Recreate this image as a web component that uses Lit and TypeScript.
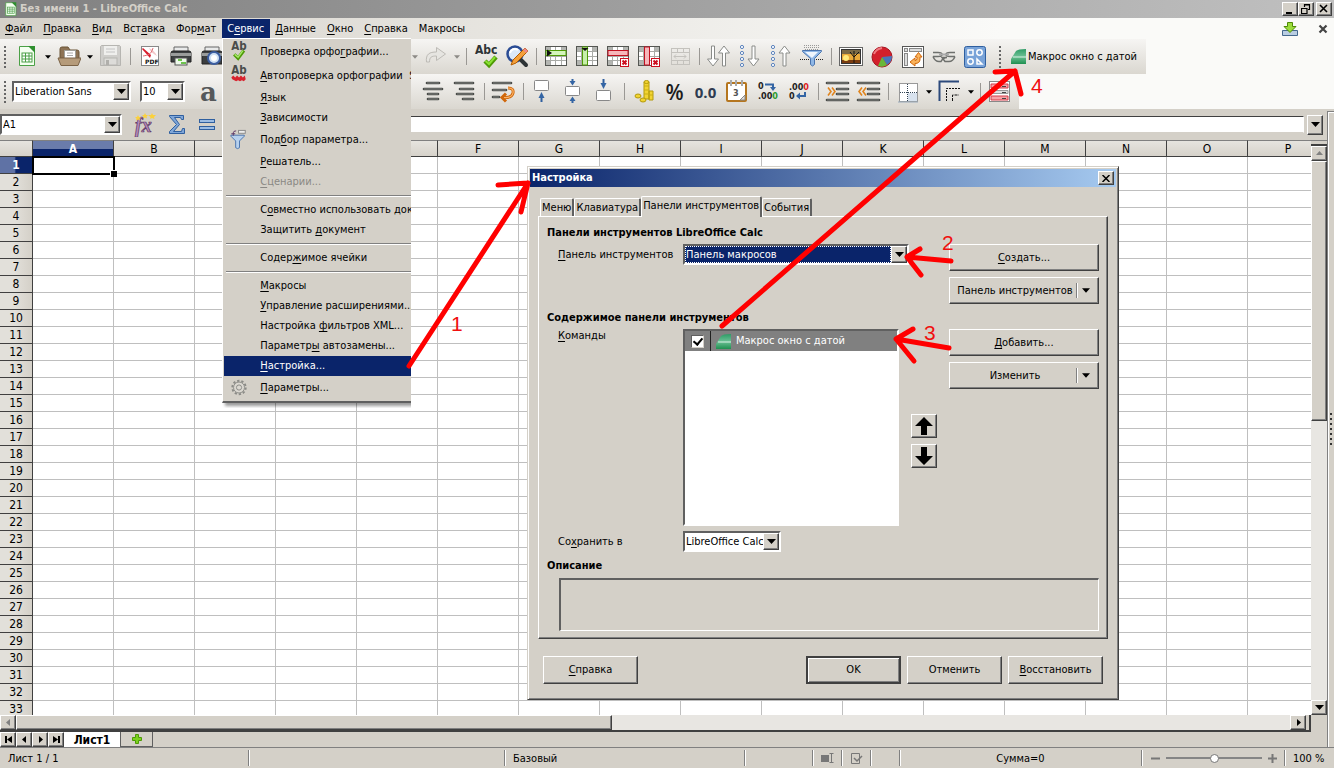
import { LitElement, html, svg, css, TemplateResult, SVGTemplateResult } from "lit";
import { customElement, property } from "lit/decorators.js";
import { classMap } from "lit/directives/class-map.js";

const FONT = css`"DejaVu Sans Condensed", "DejaVu Sans", sans-serif`;

const arrowDown = (x: number, y: number) => svg`<path d="M${x} ${y}v7" stroke="#2f5f9f" stroke-width="2"/><path d="M${x - 3} ${y + 4}h6l-3 6z" fill="#3465a4"/>`;
const arrowUp = (x: number, y: number) => svg`<path d="M${x} ${y}v-7" stroke="#2f5f9f" stroke-width="2"/><path d="M${x - 3} ${y - 4}h6l-3 -6z" fill="#3465a4"/>`;
const tableGrid = svg`<rect x="2.5" y="2.5" width="21" height="19" fill="#fff" stroke="#555753"/><path d="M3 3h5v4h-5zM3 17h5v4h-5zM18 3h5v4h-5z" fill="#b4b6b2"/><path d="M3 7.5h20M3 12.5h20M3 16.5h20M7.5 3v18M12.5 3v18M18.5 3v18" stroke="#a9aba7" fill="none"/>`;
const redCross = svg`<rect x="15.5" y="14.5" width="8" height="8" fill="#fff" stroke="#cc1020"/><path d="M17.5 16.5l4 4M21.5 16.5l-4 4" stroke="#cc1020" stroke-width="2"/>`;
const dots = svg`<g fill="#fff" stroke="#5b83bd"><circle cx="5" cy="3" r="1.6"/><circle cx="5" cy="9" r="1.6"/><circle cx="5" cy="15" r="1.6"/><circle cx="5" cy="21" r="1.6"/></g>`;
const longArrow = "M-1.5 0h3v13h4l-5.500 7l-5.500 -7h4z";
const bars = (pts: number[][]) => svg`<g stroke="#4a4c49" stroke-width="2.6" stroke-linecap="round">${pts.map(([x1, x2, y]) => svg`<path d="M${x1} ${y}H${x2}"/>`)}</g><g stroke="#8b8d8a" stroke-width=".8">${pts.map(([x1, x2, y]) => svg`<path d="M${x1} ${y}H${x2}"/>`)}</g>`;

const ICONS: Record<string, SVGTemplateResult> = {
  newdoc: svg`<path d="M5.5 2.5h10l5 5v14h-15z" fill="#f4fff0" stroke="#4ba046"/><path d="M14 2h7v7z" fill="#2f8f2f"/><rect x="8" y="9" width="10" height="9" fill="#fff" stroke="#4ba046"/><path d="M8 12h10M8 15h10M11.5 9v9M15 9v9" stroke="#4ba046"/>`,
  open: svg`<path d="M4 14V5q0-2 2-2h6l2 3h7q2 0 2 2v7z" fill="#8d7355" stroke="#6b5436"/><rect x="8.500" y="6.500" width="11" height="9" fill="#fff" stroke="#a0a09a"/><path d="M11 9h6M11 11.500h6" stroke="#aaa"/><path d="M2 14h23l-3 7.500h-17z" fill="#b59b7a" stroke="#7b6346"/>`,
  save: svg`<path d="M3.500 1.500h18l1 1v19h-20v-19z" fill="#cfcecb" stroke="#b6b5b1"/><rect x="6" y="2" width="13" height="9" fill="#efefed"/><path d="M8 5h9M8 8h9" stroke="#c4c4c4"/><rect x="6" y="14" width="13" height="7" fill="#dddcd9" stroke="#b6b5b1"/><rect x="8" y="16" width="3" height="5" fill="#b0afab"/>`,
  pdf: svg`<rect x="4.500" y="2.500" width="17" height="19" fill="#fff" stroke="#888"/><path d="M6 4l8 7-1 3-8-9z" fill="#d81d2c"/><path d="M12 4c4 2 6 4 8 8-4-2-7-5-8-8z" fill="#f3c7c9"/><path d="M6 12c5-1 8-1 10-8" stroke="#e06a72" fill="none"/><text x="8" y="20" font-size="6" font-weight="bold" font-family="DejaVu Sans" fill="#111">PDF</text>`,
  print: svg`<path d="M6 3h14v6H6z" fill="#e9eaea" stroke="#666"/><path d="M3 9q0-2 2-2h16q2 0 2 2v9H3z" fill="#3c3f40" stroke="#222"/><path d="M3 9h20v3H3z" fill="#9a9c9b"/><rect x="7" y="14" width="12" height="7" fill="#eef9ea" stroke="#555"/><path d="M10 16h4M13 19h5" stroke="#6dc34d" stroke-width="2"/>`,
  preview: svg`<path d="M6 3h14v6H6z" fill="#e9eaea" stroke="#666"/><path d="M3 9q0-2 2-2h16q2 0 2 2v11H3z" fill="#3c3f40" stroke="#222"/><path d="M3 9h20v3H3z" fill="#9a9c9b"/><circle cx="15" cy="14" r="6" fill="#cfe0f4" stroke="#3b5da0" stroke-width="2"/><circle cx="15" cy="14" r="3" fill="#fff"/>`,
  redo: svg`<path d="M3.500 18c-1-8 3-10 10-10V3.500L22.500 10l-9 6.500V12c-5 0-7 1-7 6z" fill="#e6e5e1" stroke="#bdbbb6"/>`,
  abc: svg`<text x="2" y="10" font-size="12" font-weight="bold" font-family="DejaVu Sans Condensed" fill="#2e3436">Abc</text><path d="M12 17l4 4 7-8" stroke="#4e9a06" stroke-width="4.500" fill="none"/><path d="M12.500 17l3.500 3 6-7" stroke="#8ae234" stroke-width="2" fill="none"/>`,
  find: svg`<circle cx="11" cy="10" r="7.500" fill="#dbe8f8" stroke="#2b4c94" stroke-width="2.500"/><path d="M6 9a5 5 0 0 1 8-3" stroke="#fff" stroke-width="2" fill="none"/><path d="M17 16l5 5" stroke="#2e3436" stroke-width="4" stroke-linecap="round"/><path d="M21 4l3 3L12 19l-5 2 2-5z" fill="#f5a03a" stroke="#b35c00"/><path d="M21 4l3 3-2 2-3-3z" fill="#e88"/>`,
  rowins: svg`${tableGrid}<rect x="3" y="6.500" width="20" height="5" fill="#d4f5bb" stroke="#4e9a06"/><path d="M4 5.500l5 3.500-5 3.500z" fill="#111"/>`,
  colins: svg`${tableGrid}<rect x="8.500" y="3" width="5" height="18" fill="#c7efaa" stroke="#4e9a06"/><path d="M7.500 4h7l-3.500 3z" fill="#111"/>`,
  rowdel: svg`${tableGrid}<rect x="3" y="6.500" width="20" height="5" fill="#f6b6ba" stroke="#c01020"/>${redCross}`,
  coldel: svg`${tableGrid}<rect x="8.500" y="3" width="5" height="18" fill="#f6b6ba" stroke="#c01020"/>${redCross}`,
  merge: svg`<g stroke="#c4c2bd" fill="none"><rect x="4.500" y="4.500" width="18" height="16"/><path d="M4 8.500h18M4 16.500h18M10.500 4v4M16.500 4v4M10.500 17v4M16.500 17v4M7 12.500h12M9 10.500l-2 2 2 2M17 10.500l2 2-2 2"/></g>`,
  sort: svg`<g fill="#fff" stroke="#8a8c89"><path transform="translate(7 2)" d="${longArrow}"/><path transform="translate(18 22) rotate(180)" d="${longArrow}"/></g>`,
  asc: svg`${dots}<path transform="translate(16.500 2)" d="${longArrow}" fill="#fff" stroke="#8a8c89"/>`,
  desc: svg`${dots}<path transform="translate(16.500 22) rotate(180)" d="${longArrow}" fill="#fff" stroke="#8a8c89"/>`,
  filter: svg`<path d="M5 1.500h16M5 3.500h16M6 5.500h14" stroke="#999" stroke-dasharray="1 1"/><path d="M3.500 6.500h19v1l-7 7v6l-2 1.500-2-1.500v-6l-8-7z" fill="#8fb7e6" stroke="#4a74ad"/><path d="M6 8h13l-6 6z" fill="#eef5fd"/><path d="M1 15.500h9M17 15.500h7" stroke="#222" stroke-dasharray="1 1"/>`,
  image: svg`<rect x="1.500" y="3.500" width="23" height="18" fill="#fff" stroke="#666"/><rect x="3.500" y="5.500" width="19" height="14" fill="#e8a93a" stroke="#333"/><path d="M4 6h18v4H4z" fill="#7b6a45"/><path d="M4 16h18v3H4z" fill="#7a3c10"/><circle cx="8" cy="14" r="3" fill="#ffe97a"/><path d="M16 19v-6l-4-5M16 13l5-5M16 12V7" stroke="#111" fill="none"/>`,
  chart: svg`<circle cx="13" cy="13" r="10" fill="#d3202c" stroke="#a51420"/><path d="M13 13l10-1q0 6-5 9z" fill="#4a76bc"/><path d="M13 13l5 8q-4 3-9 1z" fill="#69b83b"/><path d="M5 10q2-5 8-6" stroke="#ef7a80" stroke-width="2" fill="none"/>`,
  pivot: svg`<rect x="2.500" y="2.500" width="21" height="21" fill="#fff" stroke="#555"/><rect x="4.500" y="4.500" width="3" height="3" fill="#ddd" stroke="#888"/><rect x="9.500" y="4.500" width="12" height="3" fill="#ddd" stroke="#888"/><rect x="4.500" y="9.500" width="3" height="12" fill="#ddd" stroke="#888"/><path d="M18.500 8.500l3.500 4.500h-2v2q0 4.500-5 4.500v2.500l-5-4 5-4v2.500q2 0 2-2v-1.500h-2z" fill="#fbb45c" stroke="#d0670a"/>`,
  link: svg`<g fill="none" stroke="#6e706d" stroke-width="1.500"><path d="M2 8.500h5q4 0 4 2t-4 2H2M24 8.500h-5q-4 0-4 2t4 2h5M2 12.500q2 5 6 5h2q2-4 6-4M24 12.500q-2 5-6 5h-4l-3-4h4"/></g><path d="M8 10.500h10" stroke="#aaa" stroke-width="2"/>`,
  draw: svg`<rect x="2.500" y="2.500" width="21" height="21" rx="2" fill="#79a3d8" stroke="#2f5f9f"/><g fill="none" stroke="#fff" stroke-width="1.500"><rect x="6" y="6" width="5" height="5"/><circle cx="17.500" cy="8.500" r="2.700"/><circle cx="8.500" cy="17.500" r="2.700"/><path d="M15 15v5h5z"/></g>`,
  macro: svg`<defs><linearGradient id="mg" x1="0" y1="0" x2="0" y2="1"><stop offset="0" stop-color="#2e9c66"/><stop offset=".5" stop-color="#6cc095"/><stop offset="1" stop-color="#1f9050"/></linearGradient></defs><path d="M0 15V10L5 2Q7 0 15 0V15z" fill="url(#mg)"/><path d="M2 8h13" stroke="#d7f0e2"/>`,
  center: bars([[6, 18, 4], [3, 21, 10], [7, 17, 15], [7, 17, 20]]),
  right: bars([[3, 21, 4], [8, 21, 10], [5, 21, 15], [11, 21, 20]]),
  wrap: svg`${bars([[2, 20, 4], [2, 15, 11], [2, 8, 18]])}<path d="M17 9q6 0 5 5t-9 4.500M15 14.500l-4 4 4 4" stroke="#d0670a" stroke-width="3" fill="none"/><path d="M17 9q6 0 5 5t-9 4.500" stroke="#fbb56a" stroke-width="1.200" fill="none"/>`,
  vtop: svg`<rect x="4.500" y="1.500" width="14" height="10" rx="1" fill="#fff" stroke="#888"/>${arrowUp(11.5, 23)}`,
  vmid: svg`<rect x="4.500" y="7.500" width="14" height="9" rx="1" fill="#fff" stroke="#888"/><path d="M11.500 0v3M11.500 24v-3" stroke="#3465a4" stroke-width="2"/><path d="M8.500 2h6l-3 4.500zM8.500 22h6l-3-4.500z" fill="#3465a4"/>`,
  vbot: svg`<rect x="4.500" y="11.500" width="14" height="10" rx="1" fill="#fff" stroke="#888"/>${arrowDown(11.5, 0)}`,
  coins: svg`<g fill="#f2d432" stroke="#b39a0c"><path d="M13 3h5v17h-5zM18 12h4v9h-4z"/><ellipse cx="15.500" cy="3" rx="2.500" ry="1.500"/><ellipse cx="7" cy="17" rx="3" ry="2"/><ellipse cx="12" cy="21" rx="3" ry="2"/></g><path d="M13 7h5M13 11h5M13 15h5M18 16h4" stroke="#c9ae14"/>`,
  date: svg`<rect x="3" y="4" width="19" height="18" rx="1" fill="#fff" stroke="#b5761f" stroke-width="2"/><path d="M7 1v6M12 1v6M18 1v6" stroke="#666" stroke-width="2"/><path d="M7 1v6M12 1v6M18 1v6" stroke="#eee"/><text x="9" y="17" font-size="9" font-weight="bold" font-family="DejaVu Sans Condensed" fill="#555">3</text><path d="M16 21h5v-5z" fill="#ddd" stroke="#888"/>`,
  decadd: svg`<g font-size="9" font-weight="bold" font-family="DejaVu Sans Condensed"><text x="3" y="10" fill="#222">0</text><text x="3" y="20" fill="#222">.00<tspan fill="#2d9a2d">0</tspan></text></g><path d="M10 5.500h8V9" stroke="#3465a4" stroke-width="2" fill="none"/><path d="M15 8h6l-3 4z" fill="#3465a4"/>`,
  decdel: svg`<g font-size="9" font-weight="bold" font-family="DejaVu Sans Condensed"><text x="3" y="11" fill="#222">.00<tspan fill="#dc1c1c">0</tspan></text><text x="3" y="20" fill="#222">0</text></g><path d="M19 13v4h-6" stroke="#3465a4" stroke-width="2" fill="none"/><path d="M14 13.500v7l-4-3.500z" fill="#3465a4"/>`,
  indent: svg`${bars([[2, 23, 4], [12, 23, 10], [12, 23, 15], [2, 23, 21]])}<path d="M3 8.500l3 4-3 4M7 8.500l3 4-3 4" stroke="#e0851f" stroke-width="1.600" fill="none"/>`,
  outdent: svg`${bars([[2, 23, 4], [12, 23, 10], [12, 23, 15], [2, 23, 21]])}<path d="M6 8.500l-3 4 3 4M10 8.500l-3 4 3 4" stroke="#e0851f" stroke-width="1.600" fill="none"/>`,
  borders: svg`<rect x="4.500" y="4.500" width="18" height="18" fill="#fff" stroke="#999"/><path d="M12.500 5v17M5 13.500h17" stroke="#345" stroke-dasharray="1 1"/><path d="M13 14h9v8h-9z" fill="#d8e2ee"/><path d="M3 23h20" stroke="#9ab"/>`,
  linestyle: svg`<path d="M2.500 22V2.500H22" stroke="#2c4a7c" stroke-width="2" fill="none"/><path d="M9.500 22V9.500H23" stroke="#111" stroke-dasharray="2 1" fill="none"/><path d="M15.500 22v-6H22" stroke="#111" stroke-dasharray="3 1" fill="none"/>`,
  cond: svg`<rect x="2.500" y="2.500" width="20" height="20" fill="#fff" stroke="#888"/><path d="M4 5h17v4H4zM4 17h17v4H4z" fill="#f6a3a8" stroke="#d43c48"/><path d="M4 11.500h17v3H4z" fill="#ddd" stroke="#999"/><path d="M15 7.500h4M15 13.500h4M15 19.500h4" stroke="#444"/>`,
  fx: svg`<text x="2" y="20" font-size="20" font-style="italic" font-weight="bold" font-family="Liberation Serif" fill="#b48ab8" stroke="#5c3566" stroke-width=".7">fx</text><path d="M5 3l1 2 2 0-1.500 1.500.5 2-2-1-2 1 .500-2L2 5h2zM12 1l1 2 2 0-1.500 1.500.5 2-2-1-2 1 .500-2L9 3h2zM19 1l1 2 3 0-2 2 .5 2-2.500-1-2 1 .500-2L15 3h3z" fill="#fbd13b"/>`,
  sum: svg`<path d="M5.500 3.500h14v4h-2l-1-2h-6l5 7-6 7h8l1-3h2v5h-15v-2l7-7-7-8z" fill="#7fa6d8" stroke="#2f5f9f"/>`,
  equal: svg`<rect x="4.500" y="7.500" width="15" height="3" fill="#9bbce4" stroke="#2f5f9f"/><rect x="4.500" y="14.500" width="15" height="3" fill="#9bbce4" stroke="#2f5f9f"/>`,
  spell: svg`<text x="4" y="10" font-size="12" font-weight="bold" font-family="DejaVu Sans Condensed" fill="#4a4c4a">Ab</text><path d="M7 15l4 4 6-8" stroke="#4e9a06" stroke-width="3.500" fill="none"/><path d="M7.500 15l3.500 3 5-7" stroke="#a6e86a" stroke-width="1.500" fill="none"/>`,
  autospell: svg`<text x="4" y="10" font-size="12" font-weight="bold" font-family="DejaVu Sans Condensed" fill="#4a4c4a">Ab</text><path d="M4 14l2-2 2 2 2-2 2 2 2-2 2 2 2-2 1 4-2 2-2-1-2 1-2-1-2 1-2-1-2-1z" fill="#d8232e"/>`,
  goal: svg`<path d="M3.500 7.500h14v1l-5 5v7l-2 1-2-1v-7l-5-5z" fill="#b7d1ee" stroke="#4a74ad"/><rect x="11.500" y="2.500" width="7" height="3" fill="#eee" stroke="#888"/><path d="M6 8V5q0-2 3-2M4 6h4" stroke="#5c3566" fill="none"/>`,
  gear: svg`<circle cx="12" cy="12" r="7" fill="none" stroke="#8b8b87" stroke-width="2" stroke-dasharray="2.400 2"/><circle cx="12" cy="12" r="5.700" fill="#dbd8d1" stroke="#8b8b87"/><circle cx="12" cy="12" r="2.700" fill="none" stroke="#8b8b87"/>`,
};

const icon = (name: string) => html`<svg class="icon" viewBox="0 0 25 25" aria-hidden="true">${ICONS[name]}</svg>`;
const macroIcon = html`<svg class="macro-icon" viewBox="0 0 15 15" aria-hidden="true">${ICONS.macro}</svg>`;
const tri = (dir: "down" | "up" | "left" | "right") => {
  const d = { down: "M0 2h9l-4.500 5z", up: "M1 6h7l-3.500-4z", left: "M6 1v7l-4-3.500z", right: "M3 1v7l4-3.500z" }[dir];
  return html`<svg class="tri" viewBox="0 0 9 9" aria-hidden="true"><path d=${d} fill="currentColor" /></svg>`;
};
/** Renders a caption; the letter after "_" is the underlined access key. */
const caption = (s: string) => {
  const i = s.indexOf("_");
  return i < 0 ? html`${s}` : html`${s.slice(0, i)}<u>${s[i + 1]}</u>${s.slice(i + 2)}`;
};

const shared = css`
  * { box-sizing: border-box; }
  button, input, select { font: inherit; color: inherit; margin: 0; padding: 0; border: 0; border-radius: 0; background: none; outline: 0; }
  select { appearance: none; }
  u { text-underline-offset: 2px; }
  .icon { width: 25px; height: 25px; display: block; flex: none; }
  .macro-icon { width: 15px; height: 15px; display: block; flex: none; }
  .tri { width: 9px; height: 9px; display: block; flex: none; }
  .raised { background: #d4d0c8; border: 1px solid; border-color: #fff #404040 #404040 #fff; box-shadow: inset -1px -1px #808080; display: flex; align-items: center; justify-content: center; }
  .combo { display: flex; background: #fff; border: 2px solid; border-color: #606060 #fff #fff #606060; height: 21px; }
  .combo .field { flex: 1; min-width: 0; padding-left: 1px; }
  .combo .drop { width: 16px; flex: none; pointer-events: none; }
`;

@customElement("calc-toolbar")
export class CalcToolbar extends LitElement {
  @property({ attribute: false }) tools: string[] = [];
  static styles = [shared, css`
    :host { display: flex; align-items: center; height: 35px; }
    .tool { width: 31px; height: 31px; display: flex; align-items: center; justify-content: center; flex: none; white-space: nowrap; }
    .arrow { width: 11px; height: 31px; display: flex; align-items: center; justify-content: center; flex: none; }
    .arrow svg { width: 6px; height: 6px; }
    .muted { color: #8c8a86; }
    .sep { width: 8px; height: 17px; flex: none; background: linear-gradient(#9a9894, #9a9894) center / 1px 100% no-repeat; }
    .word { font-family: "Open Sans", sans-serif; }
    .percent { font-size: 21px; font-weight: 600; color: #1c1c1c; }
    .number { font-size: 15px; font-weight: 700; color: #2e3b50; }
  `];
  render() {
    return this.tools.map((t) => {
      if (t === "|") return html`<span class="sep"></span>`;
      if (t === "v" || t === "~") return html`<button class=${classMap({ arrow: true, muted: t === "~" })} aria-label="▾">${tri("down")}</button>`;
      if (t === "%") return html`<button class="tool word percent">%</button>`;
      if (t === "0.0") return html`<button class="tool word number">0.0</button>`;
      return html`<button class="tool" aria-label=${t}>${icon(t)}</button>`;
    });
  }
}

interface MenuEntry { text?: string; icon?: string; keys?: string; off?: boolean; active?: boolean; }
const SERVICE: MenuEntry[] = [
  { text: "Проверка орфо_графии...", icon: "spell" },
  { text: "_Автопроверка орфографии", icon: "autospell", keys: "Shift+F7" },
  { text: "_Язык" }, { text: "_Зависимости" },
  { text: "Под_бор параметра...", icon: "goal" },
  { text: "_Решатель..." }, { text: "_Сценарии...", off: true }, {},
  { text: "С_овместно использовать документ..." }, { text: "Защитить _документ" }, {},
  { text: "Содер_жимое ячейки" }, {},
  { text: "_Макросы" }, { text: "_Управление расширениями..." }, { text: "Настройка _фильтров XML..." },
  { text: "Параметр_ы автозамены..." }, { text: "_Настройка...", active: true },
  { text: "_Параметры...", icon: "gear" },
];

@customElement("service-menu")
export class ServiceMenu extends LitElement {
  static styles = [shared, css`
    :host { display: block; width: 189px; overflow: hidden; padding-bottom: 5px; color: #000; }
    .menu { background: #d4d0c8; padding: 1px 0 1px 1px; border-left: 1px solid #fff; border-top: 1px solid #fff; border-bottom: 2px solid #606060; box-shadow: 3px 3px 3px #0006; }
    .item { display: grid; grid-template-columns: 36px 149px auto; align-items: center; height: 20px; width: 100%; text-align: left; white-space: nowrap; }
    .item.tall { height: 24px; }
    .item .icon { grid-column: 1; margin-left: 3px; height: 24px; }
    .label { grid-column: 2; }
    .off { color: #8a8884; }
    .active { background: #0a246a; color: #fff; }
    .rule { height: 2px; margin: 3px 0 3px 2px; border: 0; border-top: 1px solid #808080; border-bottom: 1px solid #fff; }
  `];
  render() {
    return html`<div class="menu" role="menu">${SERVICE.map((m) => !m.text ? html`<hr class="rule" />` : html`
      <button role="menuitem" class=${classMap({ item: true, tall: !!m.icon, off: !!m.off, active: !!m.active })} ?disabled=${m.off}>
        ${m.icon ? icon(m.icon) : ""}<span class="label">${caption(m.text)}</span>${m.keys ? html`<span>${m.keys}</span>` : ""}
      </button>`)}</div>`;
  }
}

@customElement("calc-sheet")
export class CalcSheet extends LitElement {
  static styles = [shared, css`
    :host { display: block; overflow: hidden; background: #fff; }
    table { border-collapse: separate; border-spacing: 0; table-layout: fixed; width: 0; font-size: 12px; }
    .rows { width: 33px; }
    .cells { width: 81px; }
    th, td { padding: 0; height: 17px; line-height: 14px; overflow: hidden; }
    td { border-right: 1px solid #bfbfbf; border-bottom: 1px solid #bfbfbf; }
    th { font-weight: normal; text-align: center; }
    thead th { border-right: 1px solid #404040; border-bottom: 1px solid #404040; border-top: 1px solid #808080; background: linear-gradient(#e6e4df, #d6d2ca); }
    tbody th { border-right: 1px solid #404040; border-bottom: 1px solid #404040; background: linear-gradient(90deg, #e2e0da 45%, #d4d0c8); line-height: 16px; }
    thead .current { background: linear-gradient(#6a7cab 50%, #0a246a 50%); color: #fff; font-weight: bold; }
    tbody .current { background: linear-gradient(90deg, #5f72a5 45%, #0a246a 50%); color: #fff; font-weight: bold; }
    .cursor { position: relative; overflow: visible; outline: 2px solid #000; outline-offset: -1px; }
    .cursor::after { content: ""; position: absolute; right: -4px; bottom: -4px; width: 6px; height: 6px; background: #000; border: solid #fff; border-width: 1px 0 0 1px; }
  `];
  render() {
    const cols = [..."ABCDEFGHIJKLMNOP"];
    const rows = Array.from({ length: 33 }, (_, i) => i + 1);
    return html`<table>
      <colgroup><col class="rows" />${cols.map(() => html`<col class="cells" />`)}</colgroup>
      <thead><tr><th></th>${cols.map((c, i) => html`<th scope="col" class=${classMap({ current: i === 0 })}>${c}</th>`)}</tr></thead>
      <tbody>${rows.map((r) => html`<tr><th scope="row" class=${classMap({ current: r === 1 })}>${r}</th>${cols.map((_, i) => html`<td class=${classMap({ cursor: r === 1 && i === 0 })}></td>`)}</tr>`)}</tbody>
    </table>`;
  }
}

@customElement("customize-dialog")
export class CustomizeDialog extends LitElement {
  static styles = [shared, css`
    :host { display: flex; flex-direction: column; width: 592px; background: #d4d0c8; padding: 2px; border: 1px solid; border-color: #d4d0c8 #404040 #404040 #d4d0c8; box-shadow: inset 1px 1px #fff, inset -1px -1px #808080; }
    .title { display: flex; align-items: center; height: 18px; padding: 0 2px; background: linear-gradient(90deg, #0a246a, #a6caf0); color: #fff; font-weight: bold; }
    .title span { flex: 1; }
    .close { width: 16px; height: 14px; }
    .close svg { width: 8px; height: 7px; }
    .body { padding: 9px 8px 13px; }
    .tabs { display: flex; align-items: flex-end; height: 20px; padding-left: 2px; }
    .tab { height: 18px; padding: 0 1px; border-left: 1px solid #fff; border-top: 1px solid #fff; border-right: 2px solid #606060; border-radius: 2px 2px 0 0; white-space: nowrap; }
    .tab.on { height: 21px; margin-bottom: -1px; padding-bottom: 2px; background: #d4d0c8; z-index: 1; }
    .panel { height: 423px; border: 1px solid; border-color: #fff #404040 #404040 #fff; box-shadow: inset -1px -1px #808080; padding: 8px; }
    h2 { font: inherit; font-weight: bold; margin: 0; line-height: 16px; }
    .row { display: grid; grid-template-columns: 125px 226px 1fr 150px; padding: 3px 0 0 11px; align-items: start; }
    .row .label { line-height: 22px; }
    .first { height: 69px; }
    .row.second { height: 205px; }
    .second .label { line-height: 14px; }
    .stack { display: grid; gap: 6px; grid-column: 4; }
    .push { height: 27px; width: 100%; }
    .split { padding-right: 3px; }
    .split span { flex: 1; text-align: center; padding-left: 4px; }
    .split .tri { width: 19px; height: 15px; padding: 2px 5px; border-left: 1px solid #808080; box-shadow: inset 1px 0 #fff; box-sizing: border-box; }
    .picked { background: #0a246a; color: #fff; outline: 1px dotted #fff; outline-offset: -1px; }
    .middle { display: flex; align-items: flex-start; grid-column: 2 / 4; gap: 12px; }
    .list { width: 216px; height: 197px; background: #fff; border: 2px solid; border-color: #606060 #fff #fff #606060; flex: none; }
    .entry { display: grid; grid-template-columns: 26px 25px 1fr; align-items: center; height: 20px; background: #808080; color: #fff; }
    .entry .mark { height: 20px; display: flex; align-items: center; justify-content: center; border-right: 1px solid #202020; }
    .entry .macro-icon { justify-self: center; }
    .check { appearance: none; width: 13px; height: 13px; background: #fff; border: 1px solid; border-color: #606060 #d4d0c8 #d4d0c8 #606060; display: grid; place-items: center; }
    .check:checked::after { content: ""; width: 4px; height: 7px; border: solid #000; border-width: 0 2px 2px 0; transform: rotate(40deg); margin-top: -2px; }
    .movers { display: grid; gap: 6px; padding-top: 85px; }
    .mover { width: 26px; height: 24px; }
    .mover svg { width: 18px; height: 18px; }
    .row.store { padding-top: 0; padding-bottom: 5px; }
    .store .combo { width: 98px; }
    .note { height: 53px; margin: 4px 0 0 12px; border: solid; border-color: #606060 #fff #fff #606060; border-width: 2px 1px 1px 2px; }
    .footer { display: flex; gap: 6px; padding: 17px 5px 0; }
    .footer .push { width: 95px; height: 28px; }
    .footer .ok { margin-left: auto; border: 2px solid #404040; box-shadow: inset 1px 1px #fff, inset -1px -1px #808080; }
  `];
  render(): TemplateResult {
    const push = (t: string, extra = "") => html`<button class="raised push ${extra}"><span>${caption(t)}</span></button>`;
    const split = (t: string) => html`<button class="raised push split"><span>${t}</span>${tri("down")}</button>`;
    return html`
      <div class="title"><span>Настройка</span><button class="raised close" aria-label="Закрыть"><svg viewBox="0 0 8 7"><path d="M.5 0l7 7M7.500 0l-7 7" stroke="#000" stroke-width="1.500" /></svg></button></div>
      <div class="body">
        <div class="tabs" role="tablist">
          <button class="tab" role="tab">Меню</button><button class="tab" role="tab">Клавиатура</button>
          <button class="tab on" role="tab" aria-selected="true">Панели инструментов</button><button class="tab" role="tab">События</button>
        </div>
        <div class="panel">
          <h2>Панели инструментов LibreOffice Calc</h2>
          <div class="row first">
            <label class="label" for="bar">${caption("_Панель инструментов")}</label>
            <div class="combo"><select id="bar" class="field picked"><option>Панель макросов</option></select><span class="raised drop">${tri("down")}</span></div>
            <div class="stack">${push("_Создать...")}${split("Панель инструментов")}</div>
          </div>
          <h2>Содержимое панели инструментов</h2>
          <div class="row second">
            <span class="label">${caption("_Команды")}</span>
            <div class="middle">
              <div class="list"><div class="entry"><span class="mark"><input id="cmd" class="check" type="checkbox" checked /></span>${macroIcon}<label for="cmd">Макрос окно с датой</label></div></div>
              <div class="movers">
                <button class="raised mover" aria-label="Вверх"><svg viewBox="0 0 18 18"><path d="M9 0l9 9h-6v9H6V9H0z" /></svg></button>
                <button class="raised mover" aria-label="Вниз"><svg viewBox="0 0 18 18"><path d="M9 18l9-9h-6V0H6v9H0z" /></svg></button>
              </div>
            </div>
            <div class="stack">${push("_Добавить...")}${split("Изменить")}</div>
          </div>
          <div class="row store">
            <label class="label" for="store">${caption("Со_хранить в")}</label>
            <div class="combo"><select id="store" class="field"><option>LibreOffice Calc</option></select><span class="raised drop">${tri("down")}</span></div>
          </div>
          <h2>Описание</h2>
          <div class="note"></div>
        </div>
        <div class="footer">${push("_Справка")}${push("OK", "ok")}${push("Отменить")}${push("_Восстановить")}</div>
      </div>`;
  }
}

const MENUS = ["_Файл", "_Правка", "_Вид", "Вст_авка", "Фор_мат", "С_ервис", "_Данные", "_Окно", "_Справка", "Макросы"];

@customElement("app-root")
export class AppRoot extends LitElement {
  static styles = [shared, css`
    :host { display: flex; flex-direction: column; position: relative; height: 100vh; overflow: hidden; background: #d4d0c8; color: #000; font: 11px/14px ${FONT}; }
    .titlebar { display: flex; align-items: center; gap: 3px; height: 18px; flex: none; padding: 0 2px; background: linear-gradient(90deg, #808080, #c0c0c0); color: #d4d0c8; font-weight: bold; }
    .titlebar .icon { width: 17px; height: 17px; margin-right: -2px; }
    .titlebar .name { flex: 1; }
    .winbtns { display: flex; }
    .winbtn { width: 16px; height: 14px; color: #000; }
    .winbtn:last-child { margin-left: 2px; }
    .winbtn svg { width: 10px; height: 10px; }
    .top { background: linear-gradient(90deg, #d4d0c8, #fafaf8 75%); flex: none; }
    .menubar { display: flex; height: 21px; align-items: center; }
    .menu-slot { position: relative; }
    .menu-name { height: 19px; padding: 0 6px 0 5px; white-space: nowrap; }
    .open { background: #0a246a; color: #fff; }
    .popup { position: absolute; left: 0; top: 100%; z-index: 5; }
    .right-tools { margin-left: auto; display: flex; gap: 18px; padding-right: 5px; }
    .right-tools svg { width: 18px; height: 16px; display: block; }
    .right-tools .x { width: 12px; }
    .bar { display: flex; align-items: center; width: max-content; height: 35px; background: linear-gradient(#f6f5f3, #dad7d0); }
    .bar.standard { padding-right: 9px; }
    .bar.format { padding-right: 4px; }
    .grip { width: 11px; height: 22px; flex: none; background: repeating-linear-gradient(#666 0 2px, transparent 2px 4px) 4px 0 / 2px 100% no-repeat; }
    .covered-standard { width: 182px; }
    .covered-format { width: 194px; }
    .macro { display: flex; align-items: center; gap: 2px; height: 24px; white-space: nowrap; }
    .bar .grip.second { margin-left: 5px; width: 16px; }
    .font { width: 119px; margin-left: 1px; }
    .size { width: 45px; margin: 0 8px 0 9px; }
    .glyph { width: 31px; font: bold 26px/26px "DejaVu Serif", serif; color: #55585a; height: 31px; }
    .main { flex: 1; min-height: 0; display: flex; }
    .work { flex: 1; min-width: 0; display: flex; flex-direction: column; }
    .formula { display: flex; align-items: center; height: 31px; flex: none; padding-right: 4px; }
    .formula .name { width: 122px; margin-right: 8px; }
    .formula .line { flex: 1; min-width: 0; height: 17px; background: #fff; border: 1px solid; border-color: #404040 #fff #d4d0c8 #404040; margin-left: 5px; }
    .formula .expand { width: 16px; height: 20px; margin-left: 3px; }
    .grid { flex: 1; min-height: 0; display: flex; }
    calc-sheet { flex: 1; min-width: 0; }
    .vscroll { width: 16px; flex: none; display: flex; flex-direction: column; background: #e8e6e2; }
    .vscroll .splitter { height: 6px; background: #d4d0c8; border-top: 1px solid #808080; border-bottom: 2px solid #404040; }
    .vscroll .up, .vscroll .down { height: 15px; }
    .vscroll .thumb { height: 260px; }
    .vscroll .down { margin-top: auto; }
    .faint { color: #808080; }
    .hscroll { display: flex; height: 17px; flex: none; margin-right: 16px; background: #e8e6e2; border-bottom: 2px solid #404040; }
    .hscroll .btn { width: 16px; }
    .hscroll .thumb { flex: 0 1 596px; }
    .hscroll .end { margin-left: auto; }
    .hscroll .splitter { width: 5px; border-right: 2px solid #404040; background: #d4d0c8; }
    .tabs { display: flex; height: 15px; flex: none; }
    .tabs .nav { width: 16px; height: 15px; }
    .sheet { width: 56px; background: #fff; font-weight: bold; font-size: 12px; line-height: 14px; }
    .add { width: 33px; border: 1px solid #606060; border-top: 0; display: grid; place-items: center; }
    .add svg { width: 10px; height: 10px; }
    .side { width: 7px; flex: none; margin-top: 2px; border-left: 1px solid #808080; border-top: 1px solid #808080; box-shadow: inset 1px 1px #fff; display: grid; place-items: center; }
    .side i { width: 2px; height: 34px; background: repeating-linear-gradient(#333 0 2px, transparent 2px 5px); }
    .status { display: grid; grid-template-columns: 249px 256px 240px 68px 29px 29px 29px 242px 143px 1fr; height: 21px; flex: none; border-top: 1px solid #808080; align-items: center; }
    .status > * { height: 16px; padding-left: 8px; border-right: 1px solid #808080; box-shadow: 1px 0 #fff; line-height: 17px; white-space: nowrap; display: flex; align-items: center; }
    .status > :last-child { border: 0; box-shadow: none; }
    .status .center { justify-content: center; padding: 0; }
    .zoom { gap: 6px; color: #777; }
    .zoom svg { width: 9px; height: 9px; flex: none; }
    .zoom input { appearance: none; flex: 1; min-width: 0; margin: 0; height: 14px; background: linear-gradient(#858585, #858585) center / 100% 2px no-repeat; }
    .zoom input::-webkit-slider-thumb { appearance: none; width: 9px; height: 9px; border-radius: 50%; background: #fff; border: 1px solid #777; }
    .status .zoom { padding: 0 7px 0 9px; }
    customize-dialog { position: absolute; left: 527px; top: 166px; z-index: 6; }
    .notes { position: absolute; inset: 0; width: 100%; height: 100%; pointer-events: none; z-index: 7; }
    .notes path { fill: none; stroke: #f00; stroke-width: 5; stroke-linecap: round; stroke-linejoin: round; }
    .notes text { font: 21px "Liberation Sans", sans-serif; fill: #f01010; }
  `];
  render() {
    return html`
      <header class="titlebar">${icon("newdoc")}<span class="name">Без имени 1 - LibreOffice Calc</span>
        <span class="winbtns">
          <button class="raised winbtn" aria-label="Свернуть"><svg viewBox="0 0 10 10"><path d="M1 8h6v2H1z" /></svg></button>
          <button class="raised winbtn" aria-label="Развернуть"><svg viewBox="0 0 10 10"><path d="M3.500 3V.500h5v5H7M3 1h6M.500 4.500h5.500v5H.500zM0 4.500h6" fill="none" stroke="#000" stroke-width="1.200" /></svg></button>
          <button class="raised winbtn" aria-label="Закрыть"><svg viewBox="0 0 10 10"><path d="M1 1l7 7M8 1L1 8" stroke="#000" stroke-width="1.600" /></svg></button>
        </span>
      </header>
      <div class="top">
        <nav class="menubar">
          ${MENUS.map((m) => html`<div class="menu-slot"><button class=${classMap({ "menu-name": true, open: m === "С_ервис" })}>${caption(m)}</button>${m === "С_ервис" ? html`<service-menu class="popup"></service-menu>` : ""}</div>`)}
          <div class="right-tools">
            <button aria-label="Обновление"><svg viewBox="0 0 18 16"><path d="M1.500 9.500h15v5h-15z" fill="#b9cde2" stroke="#45688e" /><path d="M6.500 1.500h5v4h3.500L9 11.500 3 5.500h3.500z" fill="#9bdc3c" stroke="#4e8a06" /></svg></button>
            <button aria-label="Закрыть документ"><svg class="x" viewBox="0 0 12 16"><path d="M2.500 4.500l7 7M9.500 4.500l-7 7" stroke="#444" stroke-width="2.200" /></svg></button>
          </div>
        </nav>
        <div class="bar standard"><i class="grip"></i>
          <calc-toolbar .tools=${["newdoc", "v", "open", "v", "save", "|", "pdf", "print", "preview"]}></calc-toolbar>
          <span class="covered-standard"></span>
          <calc-toolbar .tools=${["~", "redo", "~", "|", "abc", "find", "|", "rowins", "colins", "rowdel", "coldel", "merge", "|", "sort", "asc", "desc", "filter", "|", "image", "chart", "pivot", "link", "draw"]}></calc-toolbar>
          <i class="grip second"></i>
          <button class="macro">${macroIcon}<span>Макрос окно с датой</span></button>
        </div>
        <div class="bar format"><i class="grip"></i>
          <div class="combo font"><input class="field" aria-label="Шрифт" value="Liberation Sans" /><span class="raised drop">${tri("down")}</span></div>
          <div class="combo size"><input class="field" aria-label="Кегль" value="10" /><span class="raised drop">${tri("down")}</span></div>
          <button class="glyph">a</button>
          <span class="covered-format"></span>
          <calc-toolbar .tools=${["center", "right", "|", "wrap", "|", "vtop", "vmid", "vbot", "|", "coins", "%", "0.0", "date", "decadd", "decdel", "|", "indent", "outdent", "|", "borders", "v", "linestyle", "v", "|", "cond"]}></calc-toolbar>
        </div>
      </div>
      <main class="main">
        <div class="work">
          <div class="formula">
            <div class="combo name"><input class="field" aria-label="Имя ячейки" value="A1" /><span class="raised drop">${tri("down")}</span></div>
            <calc-toolbar .tools=${["fx", "sum", "equal"]}></calc-toolbar>
            <input class="line" aria-label="Строка формул" /><button class="raised expand" aria-label="Развернуть строку">${tri("down")}</button>
          </div>
          <div class="grid">
            <calc-sheet></calc-sheet>
            <div class="vscroll"><i class="splitter"></i><button class="raised up faint" aria-label="Вверх">${tri("up")}</button><i class="raised thumb"></i><button class="raised down" aria-label="Вниз">${tri("down")}</button></div>
          </div>
          <div class="hscroll"><button class="raised btn faint" aria-label="Влево">${tri("left")}</button><i class="raised thumb"></i><button class="raised btn end" aria-label="Вправо">${tri("right")}</button><i class="splitter"></i></div>
          <div class="tabs">
            ${["M1 1h2v7H1zM8 1v7L3 4.500z", "M6 1v7l-4-3.500z", "M3 1v7l4-3.500z", "M6 1h2v7H6zM1 1v7l5-3.500z"].map((d) => html`<button class="raised nav" aria-label="Лист"><svg class="tri" viewBox="0 0 9 9"><path d=${d} /></svg></button>`)}
            <button class="sheet">Лист1</button>
            <button class="add" aria-label="Добавить лист"><svg viewBox="0 0 10 10"><path d="M3.500.500h3v3h3v3h-3v3h-3v-3h-3v-3h3z" fill="#7ad11f" stroke="#4e9a06" /></svg></button>
          </div>
        </div>
        <aside class="side"><i></i></aside>
      </main>
      <footer class="status">
        <span>Лист 1 / 1</span><span></span><span>Базовый</span><span></span>
        <span><svg width="14" height="12" viewBox="0 0 14 12"><path d="M0 3h8v7H0z" fill="#777" /><path d="M8.500 1.500h4M10.500 1.500v9M8.500 10.500h4" stroke="#777" /></svg></span>
        <span><svg width="13" height="13" viewBox="0 0 13 13"><path d="M1.500 1.500h8v10h-8z" fill="none" stroke="#777" /><path d="M4 6l3 3 5-5" fill="none" stroke="#777" stroke-width="1.500" /></svg></span>
        <span></span><span class="center">Сумма=0</span>
        <span class="zoom"><svg viewBox="0 0 9 9"><path d="M0 4.500h9" stroke="#777" stroke-width="2" /></svg><input type="range" min="0" max="200" value="100" aria-label="Масштаб" /><svg viewBox="0 0 9 9"><path d="M0 4.500h9M4.500 0v9" stroke="#777" stroke-width="2" /></svg></span>
        <span>100 %</span>
      </footer>
      <customize-dialog role="dialog" aria-label="Настройка"></customize-dialog>
      <svg class="notes">
        <path d="M409 366L528 183M498 185l30-2l-7 29" />
        <path d="M722 326L1015 71M995 72l20-1l6 23" />
        <path d="M951 261l-44-4l13-8M907 257l14 18" />
        <path d="M949 348l-53-9l17-10M896 339l18 22" />
        <text x="451" y="331">1</text><text x="942" y="250">2</text><text x="924" y="340">3</text><text x="1031" y="93">4</text>
      </svg>`;
  }
}
